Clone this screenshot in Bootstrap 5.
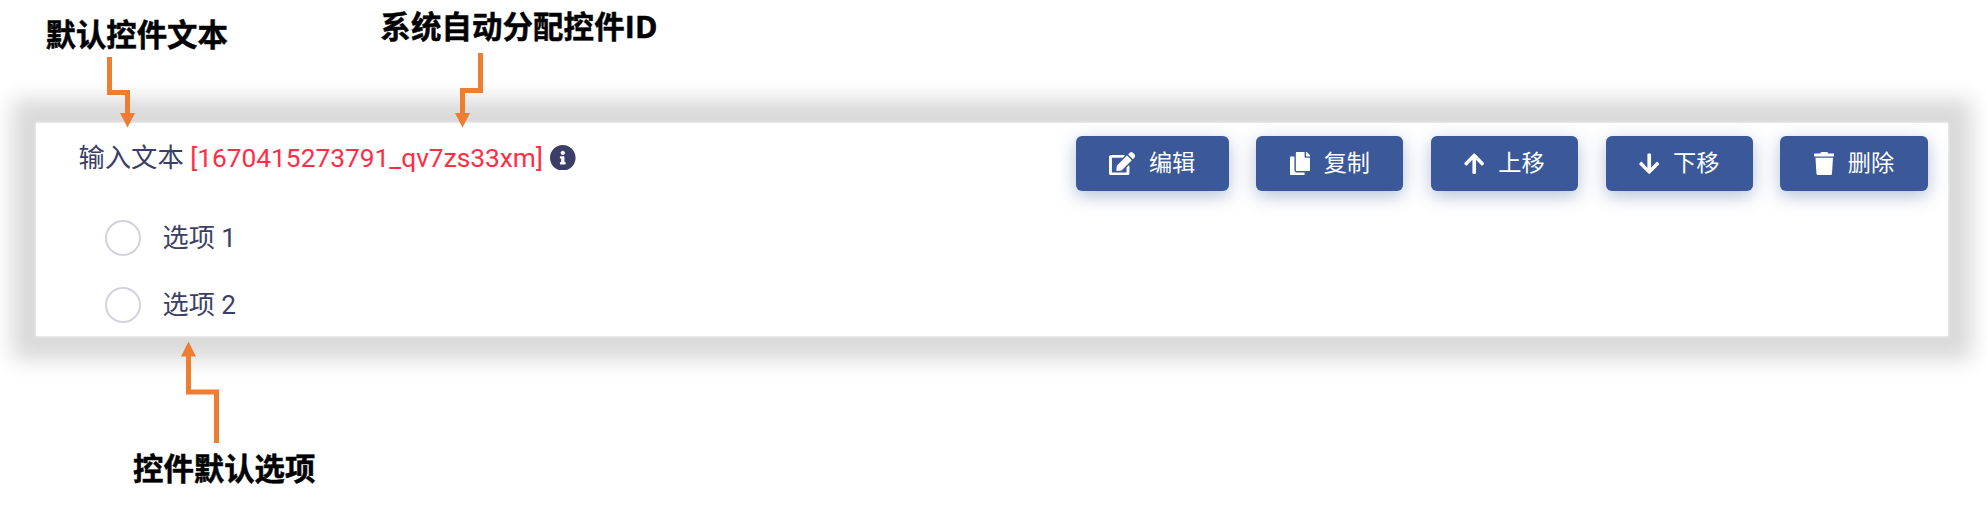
<!DOCTYPE html>
<html lang="zh-CN">
<head>
<meta charset="utf-8">
<title>控件</title>
<link href="https://cdn.jsdelivr.net/npm/bootstrap@5.3.0/dist/css/bootstrap.min.css" rel="stylesheet">
<style>
body{height:507px;overflow:hidden;background:#fff;font-family:Roboto,"Noto Sans CJK SC",sans-serif;color:#3b3f68}
.notes{height:123px;padding-left:45.5px}
.note{font:700 30.4px/40px "Open Sans","Noto Sans CJK SC",sans-serif;color:#000;white-space:nowrap;-webkit-text-stroke:.5px #000}
.note-id{margin-left:152.500px;margin-top:7px;letter-spacing:.15px}
.note-text{margin-top:15px}
.note-option{margin:113px 0 0 133px}
.panel{margin:0 39.5px 0 36px;height:212.500px;background:#fff;box-shadow:0 0 3px 0 #fff,0 0 20px 24px #dadada;padding:13px 20px 0 42.500px}
.field-name{font-size:26.3px;line-height:42px;white-space:nowrap;padding-top:1px}
.field-id{color:#ff2d46}
.info{width:25.6px;height:25.6px;fill:#3b3f68;margin-left:7px;margin-top:-1px}
.action{height:55px;padding:0 33.400px;border:0;border-radius:6px;background:#3b5998;color:#fff;font-size:23.2px;line-height:53px;gap:13.5px;box-shadow:0 5px 18px rgba(59,89,152,.38)}
.action span{margin-top:-1px}
.action svg{height:23.4px;fill:#fff}
.actions{gap:27.6px}
.choices{padding-left:26px;margin-top:29px;gap:31px}
.choice{gap:22px;font-size:26.2px;line-height:36px}
.choice input{width:36px;height:36px;margin:0;border:2px solid #d3d2de;flex:none}
.arrows{left:0;top:0;pointer-events:none}
</style>
</head>
<body class="position-relative">
<header class="notes d-flex align-items-start">
  <div class="note note-text">默认控件文本</div>
  <div class="note note-id">系统自动分配控件ID</div>
</header>
<main class="panel">
  <div class="d-flex justify-content-between align-items-start">
    <div class="field-name d-flex align-items-center">
      <span>输入文本 <span class="field-id">[1670415273791_qv7zs33xm]</span></span>
      <svg class="info" viewBox="8 8 496 496"><path d="M256 8C119.043 8 8 119.083 8 256c0 136.997 111.043 248 248 248s248-111.003 248-248C504 119.083 392.957 8 256 8zm0 110c23.196 0 42 18.804 42 42s-18.804 42-42 42-42-18.804-42-42 18.804-42 42-42zm56 254c0 6.627-5.373 12-12 12h-88c-6.627 0-12-5.373-12-12v-24c0-6.627 5.373-12 12-12h12v-64h-12c-6.627 0-12-5.373-12-12v-24c0-6.627 5.373-12 12-12h64c6.627 0 12 5.373 12 12v100h12c6.627 0 12 5.373 12 12v24z"/></svg>
    </div>
    <div class="actions d-flex">
      <button class="btn action d-flex align-items-center"><svg viewBox="0 0 576 512"><path d="M402.600 83.200l90.200 90.200c3.800 3.800 3.800 10 0 13.800L274.400 405.600l-92.800 10.300c-12.400 1.400-22.900-9.100-21.500-21.500l10.300-92.800L388.800 83.200c3.800-3.800 10-3.800 13.800 0zm162-22.900l-48.800-48.800c-15.200-15.200-39.900-15.200-55.200 0l-35.400 35.400c-3.800 3.800-3.800 10 0 13.800l90.200 90.200c3.800 3.800 10 3.800 13.800 0l35.400-35.400c15.200-15.300 15.200-40 0-55.200zM384 346.200V448H64V128h229.800c3.200 0 6.200-1.300 8.500-3.500l40-40c7.600-7.600 2.200-20.500-8.500-20.500H48C21.500 64 0 85.500 0 112v352c0 26.500 21.500 48 48 48h352c26.500 0 48-21.500 48-48V306.200c0-10.700-12.900-16-20.500-8.500l-40 40c-2.200 2.300-3.500 5.300-3.500 8.500z"/></svg><span>编辑</span></button>
      <button class="btn action d-flex align-items-center"><svg viewBox="0 0 448 512"><path d="M320 448v40c0 13.255-10.745 24-24 24H24c-13.255 0-24-10.745-24-24V120c0-13.255 10.745-24 24-24h72v296c0 30.879 25.121 56 56 56h168zm0-344V0H152c-13.255 0-24 10.745-24 24v368c0 13.255 10.745 24 24 24h272c13.255 0 24-10.745 24-24V128H344c-13.200 0-24-10.800-24-24zm120.971-31.029L375.029 7.029A24 24 0 0 0 358.059 0H352v96h96v-6.059a24 24 0 0 0-7.029-16.970z"/></svg><span>复制</span></button>
      <button class="btn action d-flex align-items-center"><svg viewBox="0 0 448 512"><path d="M34.900 289.500l-22.200-22.200c-9.400-9.400-9.400-24.600 0-33.900L207 39c9.400-9.400 24.600-9.400 33.900 0l194.300 194.300c9.400 9.400 9.400 24.600 0 33.900L413 289.400c-9.500 9.500-25 9.300-34.300-.4L264 168.600V456c0 13.300-10.700 24-24 24h-32c-13.300 0-24-10.700-24-24V168.600L69.200 289.100c-9.300 9.800-24.800 10-34.300.4z"/></svg><span>上移</span></button>
      <button class="btn action d-flex align-items-center"><svg viewBox="0 0 448 512"><path d="M413.100 222.500l22.200 22.200c9.400 9.400 9.400 24.600 0 33.900L241 473c-9.400 9.400-24.600 9.400-33.900 0L12.700 278.600c-9.400-9.400-9.400-24.600 0-33.900l22.200-22.200c9.500-9.500 25-9.300 34.300.4L184 343.400V56c0-13.300 10.700-24 24-24h32c13.300 0 24 10.700 24 24v287.400l114.800-120.500c9.300-9.800 24.800-10 34.300-.4z"/></svg><span>下移</span></button>
      <button class="btn action d-flex align-items-center"><svg viewBox="0 0 448 512"><path d="M432 32H312l-9.400-18.700A24 24 0 0 0 281.100 0H166.800a23.720 23.720 0 0 0-21.400 13.300L136 32H16A16 16 0 0 0 0 48v32a16 16 0 0 0 16 16h416a16 16 0 0 0 16-16V48a16 16 0 0 0-16-16zM53.200 467a48 48 0 0 0 47.900 45h245.800a48 48 0 0 0 47.900-45L416 128H32z"/></svg><span>删除</span></button>
    </div>
  </div>
  <div class="choices d-flex flex-column">
    <label class="choice d-flex align-items-center"><input class="form-check-input" type="radio" name="choice">选项 1</label>
    <label class="choice d-flex align-items-center"><input class="form-check-input" type="radio" name="choice">选项 2</label>
  </div>
</main>
<div class="note note-option">控件默认选项</div>
<svg class="arrows position-absolute" width="1987" height="507" fill="none" stroke="#ed7d31" stroke-width="5">
  <path d="M109.500 57V92.500H127.500V114M480.500 53V90.500H462.500V114M216.500 443V392H188.500V355"/>
  <path fill="#ed7d31" stroke="none" d="M120 113h15l-7.500 14.500zM455 113h15l-7.500 14.500zM181 356.500h15l-7.500-15z"/>
</svg>
<script src="https://cdn.jsdelivr.net/npm/bootstrap@5.3.0/dist/js/bootstrap.bundle.min.js"></script>
</body>
</html>
